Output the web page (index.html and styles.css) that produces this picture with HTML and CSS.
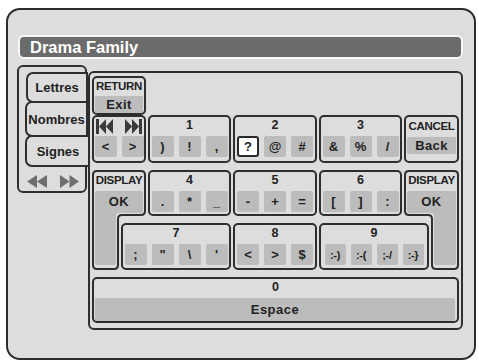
FILE: index.html
```
<!DOCTYPE html>
<html>
<head>
<meta charset="utf-8">
<link rel="stylesheet" href="styles.css">
</head>
<body>
<div class="screen">
  <div class="title">Drama Family</div>
  <div class="body">
    <div class="tabs">
      <div class="tab tab-1">Lettres</div>
      <div class="tab tab-2">Nombres</div>
      <div class="tab tab-3 tab-open">Signes</div>
      <div class="pager">
        <svg class="pg-icon" width="20" height="13" viewBox="0 0 20 13"><path d="M0 6.5L10 0v13zM10 6.5L20 0v13z"/></svg>
        <svg class="pg-icon" width="19" height="13" viewBox="0 0 19 13"><path d="M0 0l9.5 6.5L0 13zM9.5 0L19 6.5 9.5 13z"/></svg>
      </div>
    </div>
    <div class="pad">
      <div class="grp g-return"><div class="hd hd-small hd-return">RETURN</div><div class="bar">Exit</div></div>
      <div class="grp g-nav">
        <div class="hd hd-icons">
          <svg class="skip" width="17" height="15" viewBox="0 0 17 15"><path d="M0 0h3v15H0zM3 7.5L10 0v15zM10 7.5L17 0v15z"/></svg>
          <svg class="skip" width="17" height="15" viewBox="0 0 17 15"><path d="M0 0l7 7.5L0 15zM7 0l7 7.5L7 15zM14 0h3v15h-3z"/></svg>
        </div>
        <div class="keys"><div class="key">&lt;</div><div class="key">&gt;</div></div>
      </div>
      <div class="grp g-1"><div class="hd">1</div><div class="keys"><div class="key">)</div><div class="key">!</div><div class="key">,</div></div></div>
      <div class="grp g-2"><div class="hd">2</div><div class="keys"><div class="key key-sel">?</div><div class="key">@</div><div class="key">#</div></div></div>
      <div class="grp g-3"><div class="hd">3</div><div class="keys"><div class="key">&amp;</div><div class="key">%</div><div class="key">/</div></div></div>
      <div class="grp g-cancel"><div class="hd hd-small hd-cancel">CANCEL</div><div class="bar">Back</div></div>

      <div class="disp disp-l">
        <svg class="disp-shape" width="54" height="100" viewBox="0 0 54 100">
          <path class="disp-fill" d="M3 23Q3 21 5 21H49Q51 21 51 23V41Q51 43 49 43H26Q24 43 24 45V93Q24 95 22 95H5Q3 95 3 93Z"/>
          <path class="disp-line" d="M1 5Q1 1 5 1H49Q53 1 53 5V41Q53 45 49 45H30Q26 45 26 49V95Q26 99 22 99H5Q1 99 1 95Z"/>
        </svg>
        <div class="disp-text"><div class="hd hd-small">DISPLAY</div><div class="disp-ok">OK</div></div>
      </div>
      <div class="grp g-4"><div class="hd">4</div><div class="keys"><div class="key">.</div><div class="key">*</div><div class="key">_</div></div></div>
      <div class="grp g-5"><div class="hd">5</div><div class="keys"><div class="key">-</div><div class="key">+</div><div class="key">=</div></div></div>
      <div class="grp g-6"><div class="hd">6</div><div class="keys"><div class="key">[</div><div class="key">]</div><div class="key">:</div></div></div>
      <div class="disp disp-r">
        <svg class="disp-shape" width="55" height="100" viewBox="0 0 55 100">
          <path class="disp-fill" d="M3 23Q3 21 5 21H50Q52 21 52 23V93Q52 95 50 95H32Q30 95 30 93V45Q30 43 28 43H5Q3 43 3 41Z"/>
          <path class="disp-line" d="M1 5Q1 1 5 1H50Q54 1 54 5V95Q54 99 50 99H32Q28 99 28 95V49Q28 45 24 45H5Q1 45 1 41Z"/>
        </svg>
        <div class="disp-text"><div class="hd hd-small">DISPLAY</div><div class="disp-ok">OK</div></div>
      </div>

      <div class="grp g-7"><div class="hd">7</div><div class="keys"><div class="key">;</div><div class="key">"</div><div class="key">\</div><div class="key">'</div></div></div>
      <div class="grp g-8"><div class="hd">8</div><div class="keys"><div class="key">&lt;</div><div class="key">&gt;</div><div class="key">$</div></div></div>
      <div class="grp g-9"><div class="hd">9</div><div class="keys"><div class="key key-emo">:-)</div><div class="key key-emo">:-(</div><div class="key key-emo">;-/</div><div class="key key-emo">:-}</div></div></div>

      <div class="grp g-space"><div class="hd">0</div><div class="bar bar-space">Espace</div></div>
    </div>
  </div>
</div>
</body>
</html>
```

FILE: styles.css
```
* { box-sizing: border-box; }

body {
  margin: 0;
  background: #ffffff;
  font-family: "Liberation Sans", Arial, sans-serif;
  font-weight: bold;
  color: #222;
}

.screen {
  width: 470px;
  height: 352px;
  margin: 8px 0 0 6px;
  border: 2px solid #2b2b2b;
  border-radius: 14px;
  background: #dddddd;
  padding: 25px 0 0 10px;
}

.title {
  width: 445px;
  height: 24px;
  border: 2px solid #f7f7f7;
  border-radius: 6px;
  background: #6b6b6b;
  color: #fff;
  font-size: 16.5px;
  line-height: 20px;
  padding-left: 10px;
}

.body {
  display: flex;
  align-items: flex-start;
  margin-top: 6px;
  margin-left: -1px;
}

/* left tab column */
.tabs {
  width: 70px;
  height: 128px;
  border: 2px solid #2e2e2e;
  border-radius: 6px;
  padding-top: 5px;
  display: flex;
  flex-direction: column;
  align-items: flex-end;
}

.tab {
  width: 62px;
  margin-right: -3px;
  border: 2px solid #2e2e2e;
  border-radius: 7px 0 0 7px;
  background: #dddddd;
  font-size: 13px;
  display: flex;
  align-items: center;
  justify-content: center;
  position: relative;
}

.tab-1 { height: 31px; }
.tab-2 { height: 36px; width: 63px; margin-top: -2px; }
.tab-3 { height: 32px; width: 63px; margin-top: -2px; }
.tab-open { border-right: none; padding-left: 1px; }

.pager {
  align-self: stretch;
  display: flex;
  gap: 13px;
  padding-left: 8px;
  margin-top: 8px;
}

.pg-icon { display: block; fill: #6e6e6e; }

/* main keyboard panel */
.pad {
  width: 375px;
  height: 259px;
  margin: 6px 0 0 1px;
  border: 2px solid #2e2e2e;
  border-radius: 6px;
  padding: 3px 2px 0;
  display: grid;
  grid-template-columns: 27px 25px 83px 84px 83px 25px 28px;
  grid-template-rows: 32px 48px 46px 47px 46px;
  column-gap: 2px;
  row-gap: 7px;
}

.grp {
  border: 2px solid #2e2e2e;
  border-radius: 5px;
  display: flex;
  flex-direction: column;
  align-items: center;
}

.hd {
  height: 19px;
  line-height: 17px;
  font-size: 12.5px;
  text-align: center;
}

.hd-small {
  font-size: 11.5px;
  letter-spacing: -0.3px;
}

.hd-return { height: 18px; line-height: 17px; }
.hd-cancel { height: 20px; line-height: 18px; }

.hd-icons {
  align-self: stretch;
  display: flex;
  justify-content: space-between;
  align-items: center;
  padding: 0 2px;
}

.skip { display: block; fill: #3a3a3a; }

.keys {
  display: flex;
  gap: 5px;
}

.key {
  width: 22px;
  height: 21px;
  background: #bcbcbc;
  border-radius: 2px;
  font-size: 13px;
  display: flex;
  align-items: center;
  justify-content: center;
}

.key-emo { width: 21px; font-size: 11px; letter-spacing: -0.3px; }

.key-sel {
  background: #ffffff;
  border: 2px solid #2a2a2a;
  border-radius: 3px;
}

.bar {
  align-self: stretch;
  margin: 0 1px;
  height: 17px;
  background: #bcbcbc;
  border-radius: 2px;
  font-size: 13px;
  letter-spacing: 0.4px;
  display: flex;
  align-items: center;
  justify-content: center;
}

.bar-space {
  height: 23px;
  margin: 0 2px 0 1px;
  letter-spacing: 0.5px;
}

/* grid placement */
.g-return { grid-column: 1 / 3; grid-row: 1; align-self: start; height: 39px; }
.g-nav { grid-column: 1 / 3; grid-row: 2; }
.g-1 { grid-column: 3; grid-row: 2; }
.g-2 { grid-column: 4; grid-row: 2; }
.g-3 { grid-column: 5; grid-row: 2; }
.g-cancel { grid-column: 6 / 8; grid-row: 2; }
.disp-l { grid-column: 1 / 3; grid-row: 3 / 5; }
.g-4 { grid-column: 3; grid-row: 3; }
.g-5 { grid-column: 4; grid-row: 3; }
.g-6 { grid-column: 5; grid-row: 3; }
.disp-r { grid-column: 6 / 8; grid-row: 3 / 5; }
.g-7 { grid-column: 2 / 4; grid-row: 4; }
.g-8 { grid-column: 4; grid-row: 4; }
.g-9 { grid-column: 5 / 7; grid-row: 4; }
.g-space { grid-column: 1 / 8; grid-row: 5; }

/* L-shaped DISPLAY buttons */
.disp {
  display: grid;
  grid-template: 1fr / 1fr;
}

.disp-shape {
  grid-area: 1 / 1;
  display: block;
}

.disp-fill { fill: #bcbcbc; }
.disp-line { fill: none; stroke: #2e2e2e; stroke-width: 2; }

.disp-text {
  grid-area: 1 / 1;
  padding-top: 2px;
  display: flex;
  flex-direction: column;
  align-items: center;
}

.disp-ok {
  height: 22px;
  line-height: 22px;
  font-size: 13px;
  letter-spacing: 0.4px;
}
```
